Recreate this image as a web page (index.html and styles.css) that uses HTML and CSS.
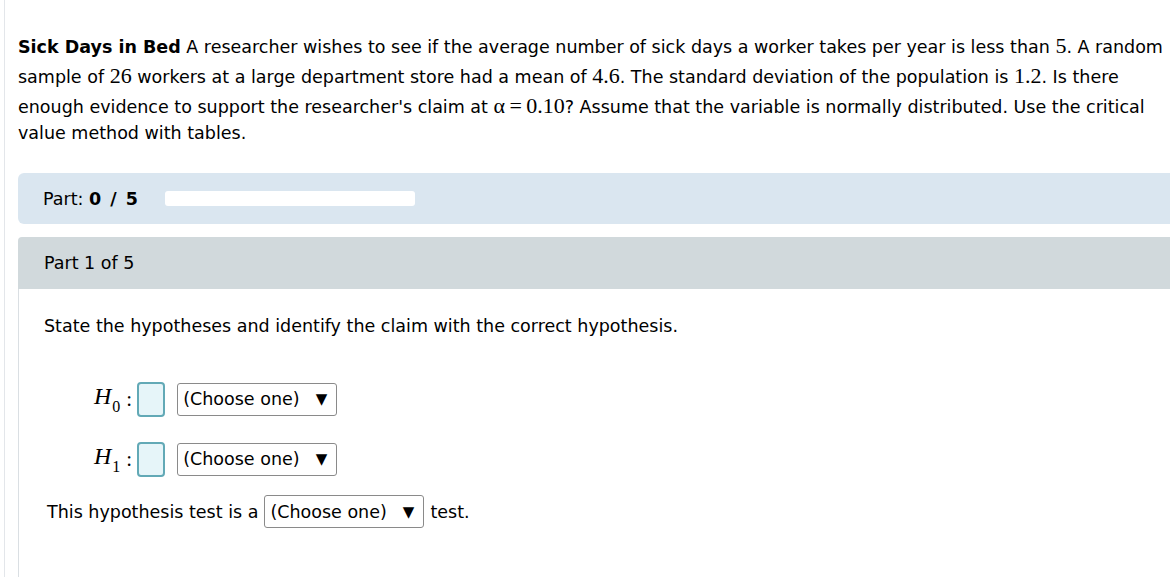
FILE: index.html
```html
<!DOCTYPE html>
<html lang="en">
<head>
  <meta charset="UTF-8">
  <title>Sick Days in Bed</title>
  <link rel="stylesheet" href="styles.css">
</head>
<body>
  <div class="page">
    <div class="content">

      <p class="problem"><strong>Sick Days in Bed</strong> A researcher wishes to see if the average number of sick days a worker takes per year is less than <span class="num">5</span>. A random<br>
      sample of <span class="num">26</span> workers at a large department store had a mean of <span class="num">4.6</span>. The standard deviation of the population is <span class="num">1.2</span>. Is there<br>
      enough evidence to support the researcher's claim at <span class="num">&alpha;&thinsp;=&thinsp;0.10</span>? Assume that the variable is normally distributed. Use the critical<br>
      value method with tables.</p>

      <div class="progress">
        <span>Part: <strong>0 / 5</strong></span>
        <div class="bar"></div>
      </div>

      <div class="part">
        <div class="part-head">Part 1 of 5</div>
        <div class="part-body">
          <p class="ask">State the hypotheses and identify the claim with the correct hypothesis.</p>

          <div class="hyp">
            <span class="h">H<sub>0</sub></span><span class="colon">:</span>
            <span class="box"></span>
            <span class="select">(Choose one) <span class="arrow">&#9660;</span></span>
          </div>

          <div class="hyp">
            <span class="h">H<sub>1</sub></span><span class="colon">:</span>
            <span class="box"></span>
            <span class="select">(Choose one) <span class="arrow">&#9660;</span></span>
          </div>

          <div class="test">
            This hypothesis test is a
            <span class="select">(Choose one) <span class="arrow">&#9660;</span></span>
            test.
          </div>
        </div>
      </div>

    </div>
  </div>
</body>
</html>
```

FILE: styles.css
```css
html, body { margin: 0; padding: 0; background: #fff; overflow: hidden; }
body { font-family: "DejaVu Sans", Verdana, sans-serif; font-size: 17.5px; color: #000; }

.page { margin-left: 4px; border-left: 1px solid #e3e6ea; height: 577px; padding: 31px 0 0 13px; box-sizing: border-box; }
.content { width: 1400px; }

.problem { margin: 0; line-height: 25px; white-space: nowrap; }
.problem strong { font-weight: bold; }
.num { font-family: "Liberation Serif", "Times New Roman", serif; font-size: 22px; display: inline-block; line-height: 30px; }

.progress { margin-top: 27px; background: #dae6f0; border-radius: 6px 0 0 6px; height: 51px; display: flex; align-items: center; padding-left: 25px; }
.progress strong { word-spacing: 3px; }
.progress .bar { width: 250px; height: 15px; background: #fff; border-radius: 3px; margin-left: 27px; }

.part { margin-top: 13px; }
.part-head { background: #d1d9dc; height: 52px; display: flex; align-items: center; padding-left: 26px; border-radius: 4px 0 0 0; }
.part-body { border-left: 1px solid #dadfe3; padding: 27px 0 60px 25px; min-height: 300px; }

.ask { margin: 0 0 46px; }

.hyp { display: flex; align-items: center; margin: 0 0 26px 50px; height: 34px; }
.hyp + .hyp { margin-bottom: 19px; }
.h { font-family: "Liberation Serif", "Times New Roman", serif; font-style: italic; font-size: 24px; }
.h sub { font-style: normal; font-size: 16px; vertical-align: -8px; margin-left: 1px; }
.colon { font-family: "Liberation Serif", serif; font-size: 21px; margin: 0 5px 0 6px; }
.box { width: 24px; height: 31px; border: 2px solid #62a9b6; background: #e6f5f9; border-radius: 4px; margin-right: 12px; }

.select { display: inline-flex; align-items: center; justify-content: space-between; width: 144px; height: 31px; padding: 0 9px 0 5px; border: 1px solid #8a8a8a; border-radius: 3px; background: #fff; font-size: 17.5px; }
.arrow { font-size: 15px; }

.test { display: flex; align-items: center; gap: 6px; margin-left: 3px; }
```
